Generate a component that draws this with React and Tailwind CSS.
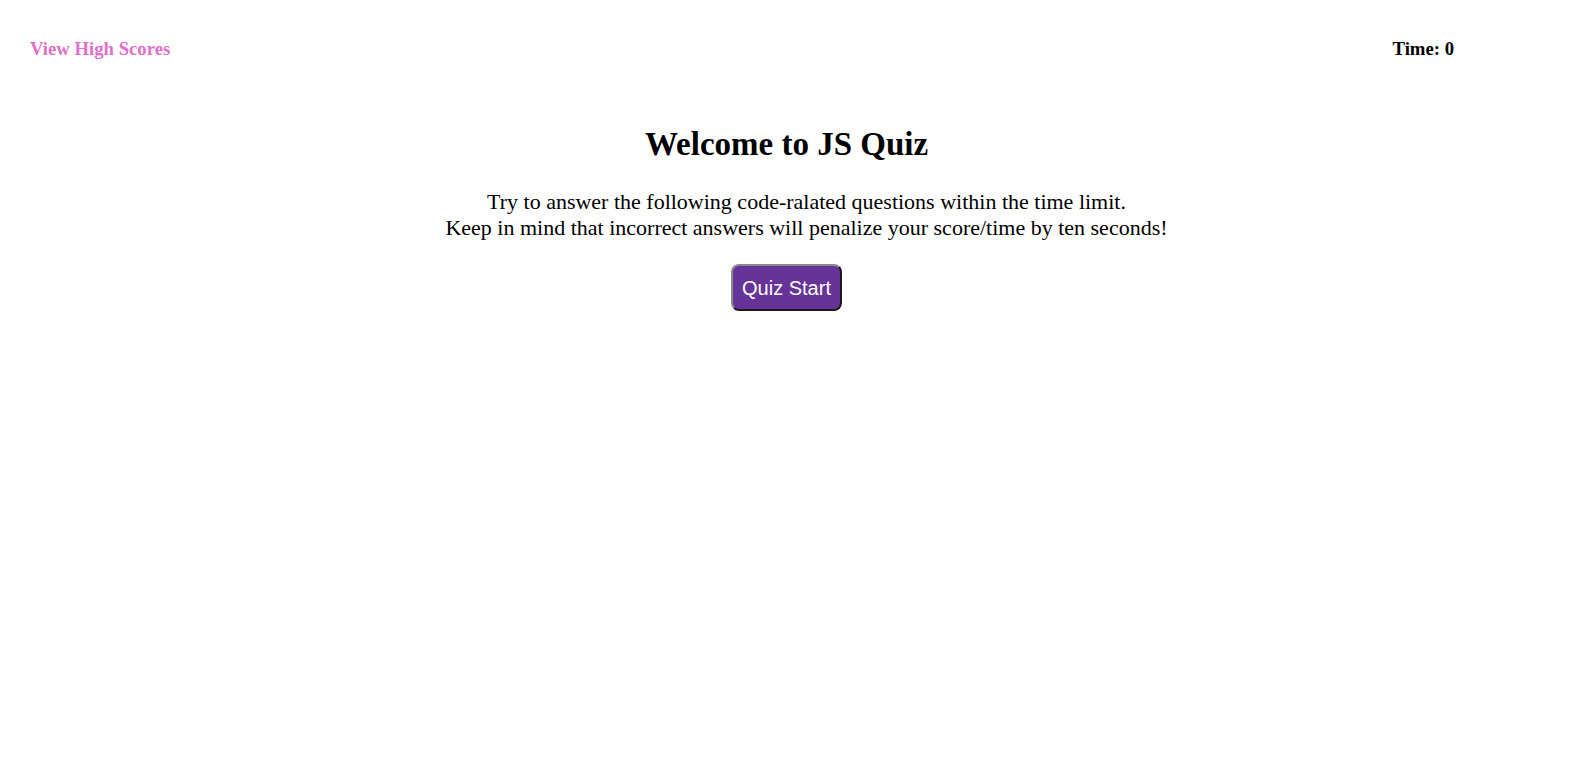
export default function App() {
  return (
    <div className="min-h-screen bg-white text-black">
      <div className="font-['Liberation_Serif',serif]">
        <header className="flex items-center justify-between pl-[30px] pr-[117px] pt-[38px]">
          <a className="text-[18.72px] font-bold text-[#e070c8] leading-[22px]">View High Scores</a>
          <div className="text-[18.72px] font-bold leading-[22px]">Time: 0</div>
        </header>
        <main className="flex flex-col items-center text-center">
          <h1 className="mt-[65px] pl-[2px] text-[33px] font-bold leading-[38px]">Welcome to JS Quiz</h1>
          <p className="mt-[26px] pl-[42px] text-[22px] leading-[26px]">
            Try to answer the following code-ralated questions within the time limit.
            <br />
            Keep in mind that incorrect answers will penalize your score/time by ten seconds!
          </p>
          <button className="mt-[23px] ml-[2px] h-[47px] w-[111px] rounded-[8px] bg-[#663399] text-white text-[20px] font-['Liberation_Sans',sans-serif] border-2 border-t-[#8a8a8a] border-l-[#8a8a8a] border-b-[#1a1a1a] border-r-[#1a1a1a]">
            Quiz Start
          </button>
        </main>
      </div>
    </div>
  );
}
